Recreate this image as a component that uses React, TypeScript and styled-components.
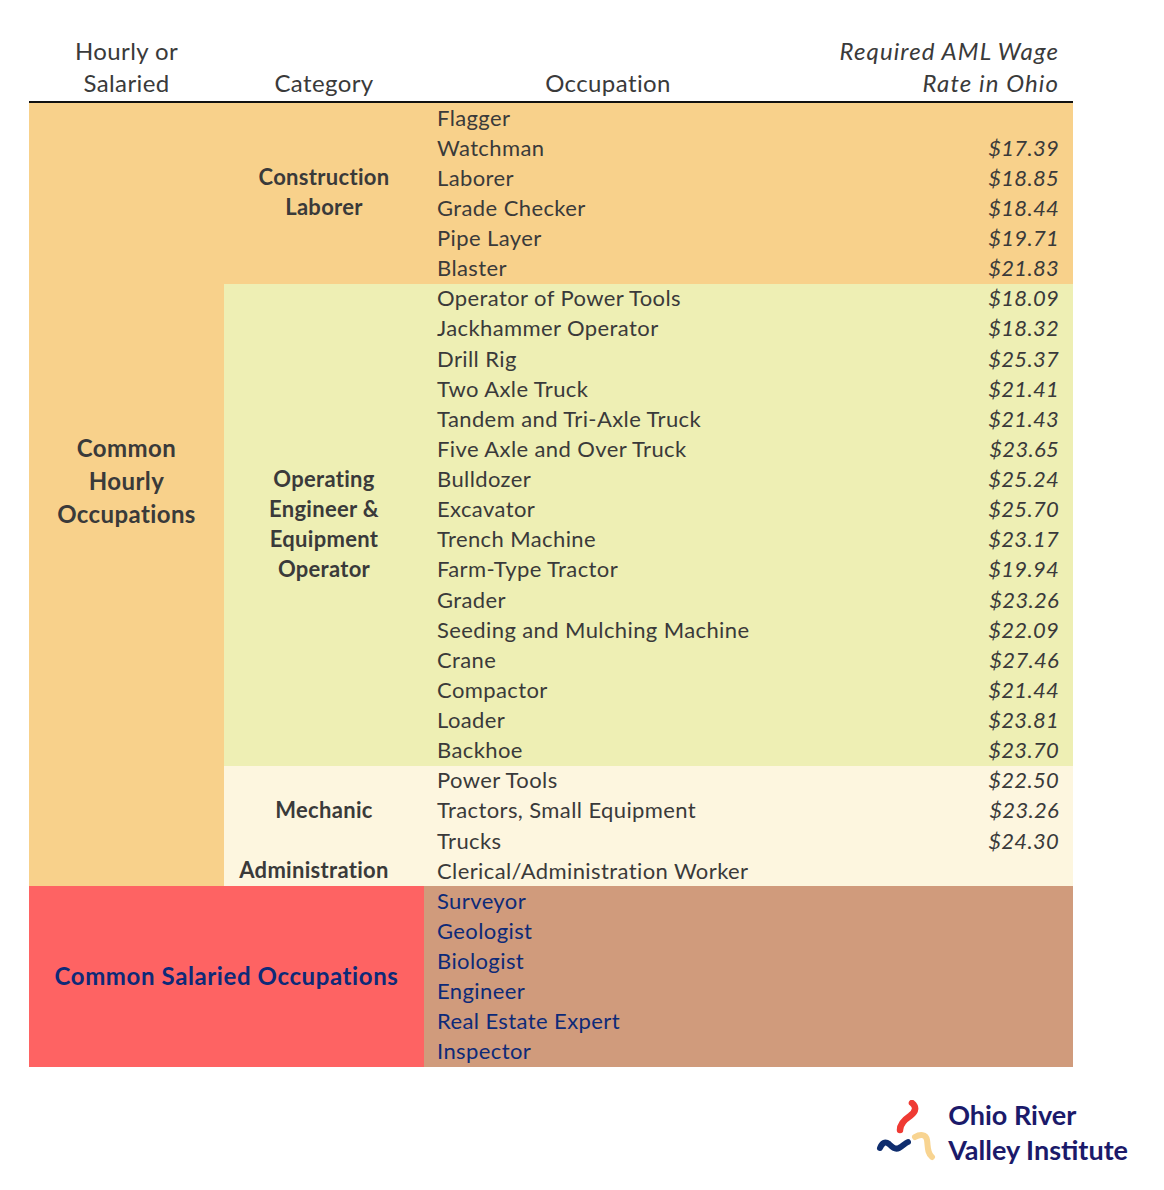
import React from "react";
import styled, { createGlobalStyle } from "styled-components";

const GlobalStyle = createGlobalStyle`
  html, body {
    margin: 0;
    padding: 0;
    background: #fff;
  }
  body {
    font-family: "Lato", "Open Sans", sans-serif;
    color: #3a3a3a;
  }
`;

const tones = {
  orange: "#f8d18b",
  green: "#eeefb4",
  cream: "#fdf6df",
  red: "#fe6363",
  brown: "#d09b7c",
  none: "transparent",
};

type Tone = keyof typeof tones;

const Page = styled.div`
  width: 1164px;
  padding: 38px 0 0 29px;
  box-sizing: border-box;
`;

const Table = styled.div`
  display: grid;
  grid-template-columns: 195px 200px 368px 281px;
  grid-template-rows: 65px repeat(32, 30.125px);
  width: 1044px;
`;

const HeadCell = styled.div<{ $col: number; $align?: "center" | "right" }>`
  grid-column: ${(p) => p.$col};
  grid-row: 1;
  display: flex;
  flex-direction: column;
  justify-content: flex-end;
  align-items: ${(p) => (p.$align === "right" ? "flex-end" : "center")};
  padding: 0 ${(p) => (p.$align === "right" ? "14px" : "0")} 2px 0;
  border-bottom: 2px solid #111;
  font-size: 24px;
  letter-spacing: ${(p) => (p.$align === "right" ? "1.1px" : "0.4px")};
  line-height: 32px;
  font-style: ${(p) => (p.$align === "right" ? "italic" : "normal")};
  text-align: ${(p) => p.$align ?? "center"};
  color: #3a3a3a;
  white-space: nowrap;
`;

const GroupCell = styled.div<{ $row: number; $span: number; $cols: number; $tone: Tone; $navy?: boolean; $lift?: number }>`
  grid-column: 1 / span ${(p) => p.$cols};
  grid-row: ${(p) => p.$row} / span ${(p) => p.$span};
  background: ${(p) => tones[p.$tone]};
  display: flex;
  align-items: center;
  justify-content: center;
  text-align: center;
  padding-bottom: ${(p) => p.$lift ?? 2}px;
  font-weight: 700;
  font-size: 24px;
  letter-spacing: ${(p) => (p.$navy ? "0.6px" : "0.4px")};
  line-height: 33px;
  color: ${(p) => (p.$navy ? "#0d2a78" : "#3a3a3a")};
`;

const CategoryCell = styled.div<{ $row: number; $span: number; $tone: Tone; $indent?: number }>`
  grid-column: 2;
  grid-row: ${(p) => p.$row} / span ${(p) => p.$span};
  background: ${(p) => tones[p.$tone]};
  display: flex;
  align-items: center;
  justify-content: center;
  text-align: center;
  padding: 0 ${(p) => p.$indent ?? 0}px 2px 0;
  font-weight: 700;
  font-size: 22px;
  letter-spacing: 0.3px;
  line-height: 30px;
  color: #3a3a3a;
`;

const OccCell = styled.div<{ $row: number; $tone: Tone; $navy?: boolean }>`
  grid-column: 3;
  grid-row: ${(p) => p.$row};
  background: ${(p) => tones[p.$tone]};
  display: flex;
  align-items: center;
  padding: 0 0 2px 13px;
  font-size: 22px;
  letter-spacing: 0.4px;
  white-space: nowrap;
  color: ${(p) => (p.$navy ? "#0d2a78" : "#3a3a3a")};
`;

const RateCell = styled.div<{ $row: number; $tone: Tone }>`
  grid-column: 4;
  grid-row: ${(p) => p.$row};
  background: ${(p) => tones[p.$tone]};
  display: flex;
  align-items: center;
  justify-content: flex-end;
  padding: 0 14px 2px 0;
  font-size: 22px;
  letter-spacing: 0.3px;
  font-style: italic;
  color: #3a3a3a;
`;

const Footer = styled.div`
  display: flex;
  justify-content: flex-end;
  padding: 30px 36px 0 0;
`;

const Logo = styled.div`
  display: flex;
  align-items: center;
  gap: 7px;
`;

const LogoText = styled.div`
  font-family: "Lato", sans-serif;
  font-weight: 700;
  font-size: 27px;
  line-height: 35px;
  color: #1b1a6a;
  white-space: nowrap;
`;

type Row = [string, string];

interface Section {
  category: string[];
  tone: Tone;
  rows: Row[];
  indent?: number;
}

const hourly: Section[] = [
  {
    category: ["Construction", "Laborer"],
    tone: "orange",
    rows: [
      ["Flagger", ""],
      ["Watchman", "$17.39"],
      ["Laborer", "$18.85"],
      ["Grade Checker", "$18.44"],
      ["Pipe Layer", "$19.71"],
      ["Blaster", "$21.83"],
    ],
  },
  {
    category: ["Operating", "Engineer &", "Equipment", "Operator"],
    tone: "green",
    rows: [
      ["Operator of Power Tools", "$18.09"],
      ["Jackhammer Operator", "$18.32"],
      ["Drill Rig", "$25.37"],
      ["Two Axle Truck", "$21.41"],
      ["Tandem and Tri-Axle Truck", "$21.43"],
      ["Five Axle and Over Truck", "$23.65"],
      ["Bulldozer", "$25.24"],
      ["Excavator", "$25.70"],
      ["Trench Machine", "$23.17"],
      ["Farm-Type Tractor", "$19.94"],
      ["Grader", "$23.26"],
      ["Seeding and Mulching Machine", "$22.09"],
      ["Crane", "$27.46"],
      ["Compactor", "$21.44"],
      ["Loader", "$23.81"],
      ["Backhoe", "$23.70"],
    ],
  },
  {
    category: ["Mechanic"],
    tone: "cream",
    rows: [
      ["Power Tools", "$22.50"],
      ["Tractors, Small Equipment", "$23.26"],
      ["Trucks", "$24.30"],
    ],
  },
  {
    category: ["Administration"],
    tone: "cream",
    indent: 20,
    rows: [["Clerical/Administration Worker", ""]],
  },
];

const salaried = ["Surveyor", "Geologist", "Biologist", "Engineer", "Real Estate Expert", "Inspector"];

const lines = (parts: string[]) =>
  parts.map((t, i) => (
    <React.Fragment key={t}>
      {i > 0 && <br />}
      {t}
    </React.Fragment>
  ));

const OrviMark = () => (
  <svg width="66" height="64" viewBox="0 0 66 64" fill="none" strokeLinecap="round" strokeLinejoin="round">
    <path d="M37 3 C41 6, 42 11, 35 16 C29 20, 25 24, 25 30" stroke="#ef3a33" strokeWidth="6.5" />
    <path d="M5 48 C7 43, 10 41, 14 44 C17 47, 20 50, 24 48 C28 46, 30 43, 33 42" stroke="#0f2d6e" strokeWidth="6" />
    <path d="M40 37 C45 34, 51 34, 52 40 C53 46, 52 53, 57 57" stroke="#f8d491" strokeWidth="6" />
  </svg>
);

const App: React.FC = () => {
  const hourlyCount = hourly.reduce((n, s) => n + s.rows.length, 0);
  let cursor = 2;

  return (
    <>
      <GlobalStyle />
      <Page>
        <Table>
          <HeadCell $col={1}>
            <span>Hourly or</span>
            <span>Salaried</span>
          </HeadCell>
          <HeadCell $col={2}>Category</HeadCell>
          <HeadCell $col={3}>Occupation</HeadCell>
          <HeadCell $col={4} $align="right">
            <span>Required AML Wage</span>
            <span>Rate in Ohio</span>
          </HeadCell>

          <GroupCell $row={2} $span={hourlyCount} $cols={1} $tone="orange" $lift={28}>
            <div>{lines(["Common", "Hourly", "Occupations"])}</div>
          </GroupCell>

          {hourly.map((s) => {
            const start = cursor;
            cursor += s.rows.length;
            return (
              <React.Fragment key={s.category.join(" ")}>
                <CategoryCell $row={start} $span={s.rows.length} $tone={s.tone} $indent={s.indent}>
                  <div>{lines(s.category)}</div>
                </CategoryCell>
                {s.rows.map(([name, rate], i) => (
                  <React.Fragment key={name}>
                    <OccCell $row={start + i} $tone={s.tone}>{name}</OccCell>
                    <RateCell $row={start + i} $tone={s.tone}>{rate}</RateCell>
                  </React.Fragment>
                ))}
              </React.Fragment>
            );
          })}

          <GroupCell $row={2 + hourlyCount} $span={salaried.length} $cols={2} $tone="red" $navy>
            Common Salaried Occupations
          </GroupCell>
          {salaried.map((name, i) => (
            <React.Fragment key={name}>
              <OccCell $row={2 + hourlyCount + i} $tone="brown" $navy>{name}</OccCell>
              <RateCell $row={2 + hourlyCount + i} $tone="brown" />
            </React.Fragment>
          ))}
        </Table>

        <Footer>
          <Logo>
            <OrviMark />
            <LogoText>
              Ohio River
              <br />
              Valley Institute
            </LogoText>
          </Logo>
        </Footer>
      </Page>
    </>
  );
};

export default App;
